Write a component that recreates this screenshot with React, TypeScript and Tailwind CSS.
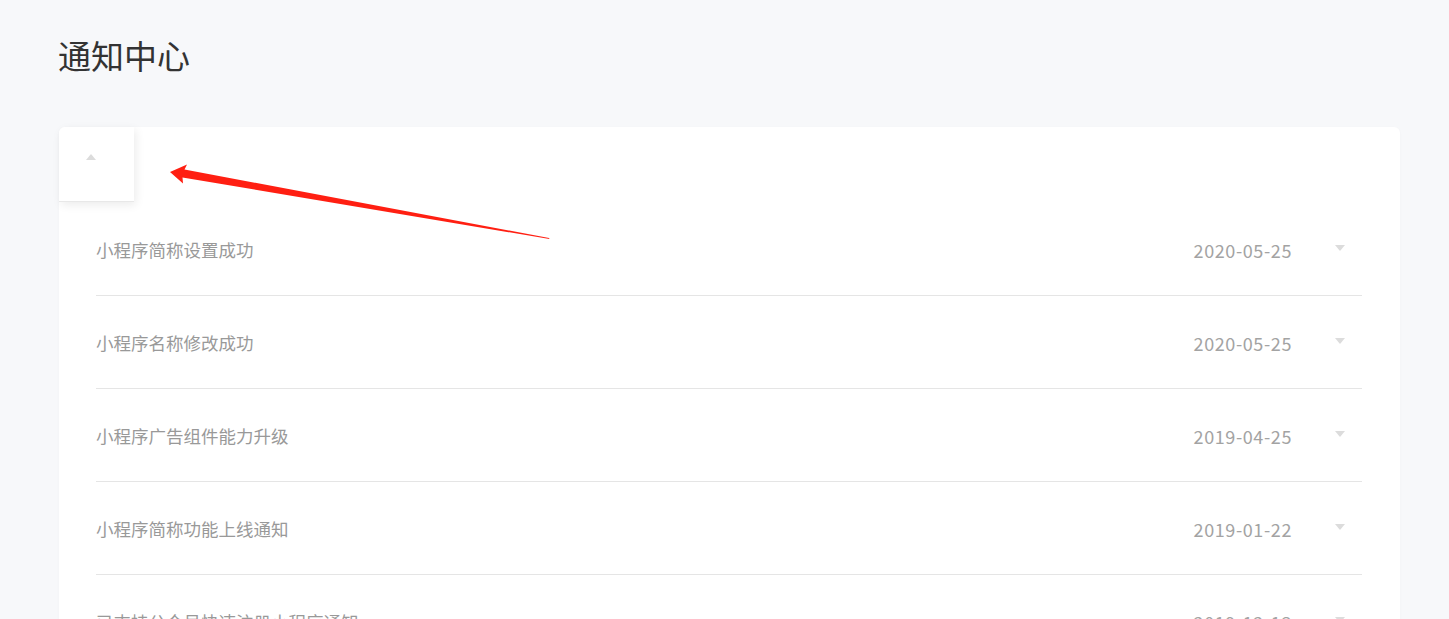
import React from 'react'

interface Notice {
  title: string
  date: string
}

const notices: Notice[] = [
  { title: '小程序简称设置成功', date: '2020-05-25' },
  { title: '小程序名称修改成功', date: '2020-05-25' },
  { title: '小程序广告组件能力升级', date: '2019-04-25' },
  { title: '小程序简称功能上线通知', date: '2019-01-22' },
  { title: '已支持公众号快速注册小程序通知', date: '2019-12-13' },
]

const font = { fontFamily: '"Noto Sans CJK SC", "Noto Sans", sans-serif' }

function Caret({ up = false }: { up?: boolean }) {
  return (
    <svg width="10" height="6" viewBox="0 0 10 6" className="block">
      {up ? <path d="M5 0 L10 6 L0 6 Z" fill="#dcdcdc" /> : <path d="M0 0 L10 0 L5 6 Z" fill="#dcdcdc" />}
    </svg>
  )
}

function Arrow() {
  // annotation arrow drawn over the card
  return (
    <svg className="absolute left-0 top-0 pointer-events-none" width="1449" height="619">
      <path
        d="M170 172 L187 164.5 L184.5 169.5 L549 238 L549.5 239 L182.5 177.5 L183 183.5 Z"
        fill="#ff1f12"
      />
    </svg>
  )
}

export default function App() {
  return (
    <div className="relative w-[1449px] h-[619px] overflow-hidden bg-[#f7f8fa]" style={font}>
      <div className="pl-[58px] pr-[49px]">
        {/* Title */}
        <h1 className="pt-[35px] h-[127px] text-[33px] leading-[40px] text-[#333] font-normal">通知中心</h1>

        {/* Card */}
        <div className="ml-px bg-white rounded-[6px] shadow-[0_1px_3px_rgba(0,0,0,0.03)]">
          <div className="w-[75px] h-[75px] bg-white rounded-tl-[6px] border-b border-[#e8e8e8] shadow-[2px_3px_10px_rgba(0,0,0,0.08)] flex justify-center pt-[27px] pr-[12px]">
            <Caret up />
          </div>

          <div className="pl-[37px] pr-[38px] pt-px">
            {notices.map((n) => (
              <div key={n.title} className="h-[93px] border-b border-[#e5e5e5] flex items-center pt-[2px]">
                <span className="flex-1 text-[17.5px] text-[#999]">{n.title}</span>
                <span className="text-[18px] tracking-[0.6px] text-[#a3a3a3]">{n.date}</span>
                <div className="w-[70px] flex justify-end pr-[17px] pb-[4px]">
                  <Caret />
                </div>
              </div>
            ))}
          </div>
        </div>
      </div>
      <Arrow />
    </div>
  )
}
